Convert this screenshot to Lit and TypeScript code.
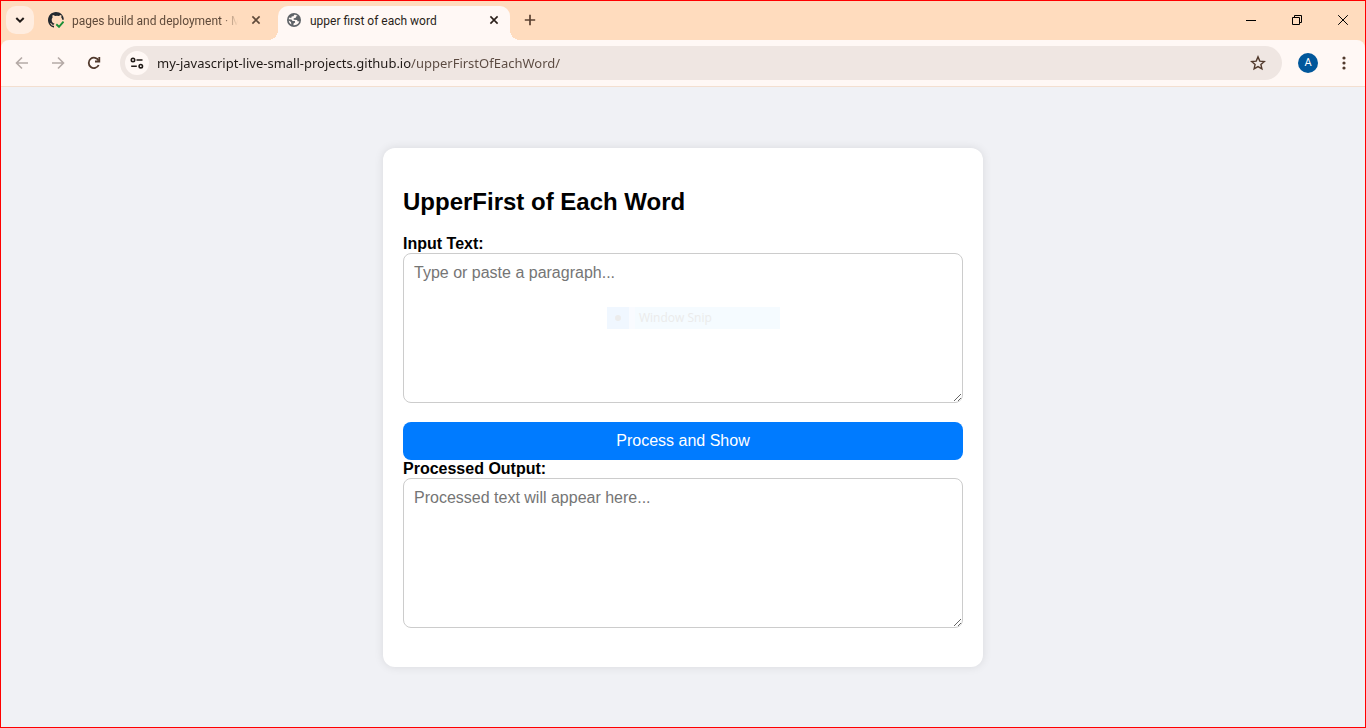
import { LitElement, html, css } from "lit";
import { customElement, state } from "lit/decorators.js";

@customElement("browser-tabs")
class BrowserTabs extends LitElement {
  static styles = css`
    :host { display: block; background: #ffdcbe; font-family: "Roboto", "Open Sans", sans-serif; font-size: 12px; }
    .strip { display: flex; align-items: flex-start; height: 39px; }
    button { font: inherit; border: 0; padding: 0; background: none; display: grid; place-items: center; color: inherit; flex: none; }
    svg { display: block; }
    .search { width: 28px; height: 28px; margin: 5px 4px 0 5px; border-radius: 10px; background: #ffede0; color: #201a17; }
    .tab { position: relative; box-sizing: border-box; display: flex; align-items: center; height: 34px; margin-top: 5px; padding: 0 6px 6px 8px; gap: 8px; flex: 0 1 232px; min-width: 0; color: #5f4a3a; }
    .tab.other { flex-basis: 240px; padding-left: 10px; padding-right: 12px; }
    .title { flex: 1; min-width: 0; padding-top: 2px; white-space: nowrap; line-height: 18px; }
    .fade { mask-image: linear-gradient(90deg, #000 calc(100% - 16px), transparent); }
    .close { width: 20px; height: 20px; }
    .active { background: #fff8f5; border-radius: 10px 10px 0 0; color: #2a1f1a; }
    .active::before, .active::after { content: ""; position: absolute; bottom: 0; width: 10px; height: 10px; }
    .active::before { right: 100%; background: radial-gradient(circle at 0 0, transparent 10px, #fff8f5 10px); }
    .active::after { left: 100%; background: radial-gradient(circle at 100% 0, transparent 10px, #fff8f5 10px); }
    .plus { width: 28px; height: 28px; margin: 5px 0 0 6px; color: #5b4030; }
    .controls { display: flex; margin-left: auto; color: #000; }
    .controls button { width: 46px; height: 38px; }
    .controls button:last-child { width: 45px; }
  `;
  render() {
    const cross = html`<svg width="10" height="10" viewBox="0 0 10 10" fill="none" stroke="currentColor" stroke-width="1.6"><path d="M1.400 1.400l7.200 7.200M8.600 1.400L1.400 8.600"/></svg>`;
    return html`
      <div class="strip">
        <button class="search" aria-label="Search tabs"><svg width="10" height="8" viewBox="0 0 10 8" fill="none" stroke="currentColor" stroke-width="2"><path d="M1.3 2L5 5.7 8.7 2"/></svg></button>
        <div class="tab other">
          <svg width="16" height="16" viewBox="0 0 16 16"><path fill="#24292f" d="M8 0C3.6 0 0 3.6 0 8c0 3.5 2.3 6.5 5.5 7.6.4.1.5-.2.5-.4v-1.5c-2.2.5-2.7-.9-2.7-.9-.4-.9-.9-1.2-.9-1.2-.7-.5.1-.5.1-.5.8.1 1.2.8 1.2.8.7 1.2 1.9.9 2.3.7.1-.5.3-.9.5-1.1-1.5-.2-2.8-1.1-2.8-3.700 0-1 .4-1.700.9-2.300-.1-.4-.3-1.200.1-2.400 0 0 .8-.2 2.400.9a8 8 0 0 1 3.800 0c1.500-1.100 2.300-.9 2.300-.9.4 1.200.2 2 .1 2.400.5.600.9 1.300.9 2.300l1.600 0C16 3.500 12.400 0 8 0z"/><path d="M8.300 12.300l2.700 2.500 4.500-5.200" fill="none" stroke="#1a8f37" stroke-width="1.900"/></svg>
          <span class="title fade">pages build and deployment · M</span>
          <button class="close" aria-label="Close tab">${cross}</button>
        </div>
        <div class="tab active">
          <svg width="16" height="16" viewBox="0 0 16 16"><circle cx="8" cy="8" r="7" fill="#5f6368"/><path fill="#fff8f5" d="M8.200 2.700c1.300 0 2.500.5 3.500 1.400l-1.600.4-.5 1.400-1.900.3v1.600l3.300.2.8 1.500 1.500-.3c-.4 1.600-1.500 2.900-3 3.600-.9.400-1.900.6-2.900.4l.2-1.700 1.500-.9-.2-1.500H6.600L5.500 7.400 2.700 7.300c.1-.6.3-1.200.6-1.700l2 .5.3-1.500 1.900-.4z"/><path fill="#fff8f5" d="M2.700 8.600l2.300 1.300.4 2.700c-1.500-.8-2.500-2.200-2.700-4z"/></svg>
          <span class="title">upper first of each word</span>
          <button class="close" aria-label="Close tab">${cross}</button>
        </div>
        <button class="plus" aria-label="New tab"><svg width="12" height="12" viewBox="0 0 12 12" stroke="currentColor" stroke-width="1.700"><path d="M6 .8v10.400M.8 6h10.400"/></svg></button>
        <div class="controls">
          <button aria-label="Minimize"><svg width="10" height="10" viewBox="0 0 10 10"><path d="M0 5.500h10" stroke="currentColor"/></svg></button>
          <button aria-label="Restore"><svg width="10" height="10" viewBox="0 0 10 10" fill="none" stroke="currentColor"><path d="M.5 2.500h7v7h-7zM2.500 2.500v-2h7v7h-2"/></svg></button>
          <button aria-label="Close window"><svg width="10" height="10" viewBox="0 0 10 10" stroke="currentColor"><path d="M.2 .2l9.600 9.600M9.800 .2L.2 9.800"/></svg></button>
        </div>
      </div>`;
  }
}

@customElement("browser-toolbar")
class BrowserToolbar extends LitElement {
  static styles = css`
    :host { display: block; background: #ffdcbe; }
    .bar { display: flex; align-items: center; gap: 8px; height: 46px; padding: 0 7px; background: #fff8f5; border-radius: 8px 8px 0 0; border-bottom: 1px solid #f3dfd0; }
    button { border: 0; padding: 0; background: none; display: grid; place-items: center; width: 28px; height: 28px; color: #51392c; flex: none; }
    button:disabled { color: #b5aaa6; }
    svg { display: block; }
    .box { flex: 1; min-width: 0; display: flex; align-items: center; height: 34px; margin: 0 4px; padding: 0 10px 0 5px; box-sizing: border-box; border-radius: 17px; background: #efe6e2; }
    .site { width: 24px; height: 24px; border-radius: 50%; background: #fff8f5; color: #201a17; }
    .url { flex: 1; min-width: 0; border: 0; padding: 0; margin-left: 8px; outline: 0; height: 20px; font: 13px/20px "Noto Sans", "Open Sans", sans-serif; background: linear-gradient(90deg, #201a17 254px, #5a4940 254px); -webkit-background-clip: text; background-clip: text; -webkit-text-fill-color: transparent; }
    .avatar { display: grid; place-items: center; width: 20px; height: 20px; border-radius: 50%; background: #01579b; color: #fff; font: 11px/20px "Roboto", sans-serif; }
  `;
  render() {
    return html`
      <div class="bar">
        <button disabled aria-label="Back"><svg width="14" height="14" viewBox="0 0 14 14" fill="none" stroke="currentColor" stroke-width="1.600"><path d="M13 7H2M7 1.500L1.500 7 7 12.500"/></svg></button>
        <button disabled aria-label="Forward"><svg width="14" height="14" viewBox="0 0 14 14" fill="none" stroke="currentColor" stroke-width="1.600"><path d="M1 7h11M7 1.500L12.500 7 7 12.500"/></svg></button>
        <button aria-label="Reload"><svg width="14" height="14" viewBox="0 0 14 14" fill="none" stroke="currentColor" stroke-width="1.800"><path d="M11.700 9A5.200 5.200 0 1 1 11.600 4.600"/><path d="M12.300 1v4.500H8"/></svg></button>
        <div class="box">
          <button class="site" aria-label="View site information"><svg width="14" height="12" viewBox="0 0 14 12" fill="none" stroke="currentColor" stroke-width="1.600"><circle cx="3" cy="3" r="1.700"/><path d="M6.500 3H12.500M1.200 9.200h5.600"/><circle cx="10.800" cy="9.200" r="1.700"/></svg></button>
          <input class="url" aria-label="Address" spellcheck="false" value="my-javascript-live-small-projects.github.io/upperFirstOfEachWord/" />
          <button aria-label="Bookmark this tab"><svg width="16" height="16" viewBox="0 0 16 16" fill="none" stroke="currentColor" stroke-width="1.400"><path d="M8 1.900l1.800 4.200 4.500.4-3.400 3 1 4.400L8 11.600l-3.900 2.300 1-4.400-3.400-3 4.500-.4z"/></svg></button>
        </div>
        <button aria-label="Profile"><span class="avatar">A</span></button>
        <button aria-label="Menu"><svg width="4" height="14" viewBox="0 0 4 14" fill="currentColor"><circle cx="2" cy="2" r="1.600"/><circle cx="2" cy="7" r="1.600"/><circle cx="2" cy="12" r="1.600"/></svg></button>
      </div>`;
  }
}

@customElement("upper-first-form")
class UpperFirstForm extends LitElement {
  @state() private source = "";
  @state() private result = "";

  static styles = css`
    :host { display: block; width: 100%; max-width: 600px; }
    .card { box-sizing: border-box; padding: 20px; background: #fff; border-radius: 12px; box-shadow: 0 0 10px rgba(0, 0, 0, 0.1); font: 16px/18px "Liberation Sans", Arial, sans-serif; color: #000; }
    h2 { margin: 20px 0; font-size: 24px; line-height: 27px; }
    label { display: block; font-weight: bold; }
    .field { position: relative; margin-bottom: 19px; }
    textarea { display: block; box-sizing: border-box; width: 100%; height: 150px; padding: 10px; border: 1px solid #ccc; border-radius: 8px; font: inherit; resize: vertical; }
    textarea::placeholder { color: #757575; }
    .go { display: block; width: 100%; padding: 10px; border: 0; border-radius: 8px; background: #007bff; color: #fff; font: inherit; }
    .snip { position: absolute; left: 204px; top: 54px; width: 173px; height: 22px; box-sizing: border-box; padding-left: 8px; display: flex; align-items: center; gap: 18px; background: linear-gradient(90deg, #f0f7ff 22px, #f9fbff 22px 28px, #f5fbff 28px); color: #ebebeb; font: 12px/22px "Open Sans", "Noto Sans", sans-serif; pointer-events: none; }
    .dot { width: 6px; height: 6px; border-radius: 50%; background: #ececec; }
  `;

  private run() {
    this.result = this.source.replace(/\S+/g, (w) => w[0].toUpperCase() + w.slice(1));
  }

  render() {
    return html`
      <main class="card">
        <h2>UpperFirst of Each Word</h2>
        <label for="source">Input Text:</label>
        <div class="field">
          <textarea id="source" placeholder="Type or paste a paragraph..." .value=${this.source} @input=${(e: Event) => (this.source = (e.target as HTMLTextAreaElement).value)}></textarea>
          <div class="snip"><span class="dot"></span><span>Window Snip</span></div>
        </div>
        <button class="go" @click=${this.run}>Process and Show</button>
        <label for="result">Processed Output:</label>
        <div class="field">
          <textarea id="result" readonly placeholder="Processed text will appear here..." .value=${this.result}></textarea>
        </div>
      </main>`;
  }
}

@customElement("app-root")
class AppRoot extends LitElement {
  static styles = css`
    :host { display: flex; flex-direction: column; box-sizing: border-box; min-height: 100vh; border: 1px solid #f00; }
    .page { flex: 1; display: flex; justify-content: center; align-items: center; background: #f0f1f5; }
  `;
  render() {
    return html`
      <browser-tabs></browser-tabs>
      <browser-toolbar></browser-toolbar>
      <div class="page"><upper-first-form></upper-first-form></div>`;
  }
}
